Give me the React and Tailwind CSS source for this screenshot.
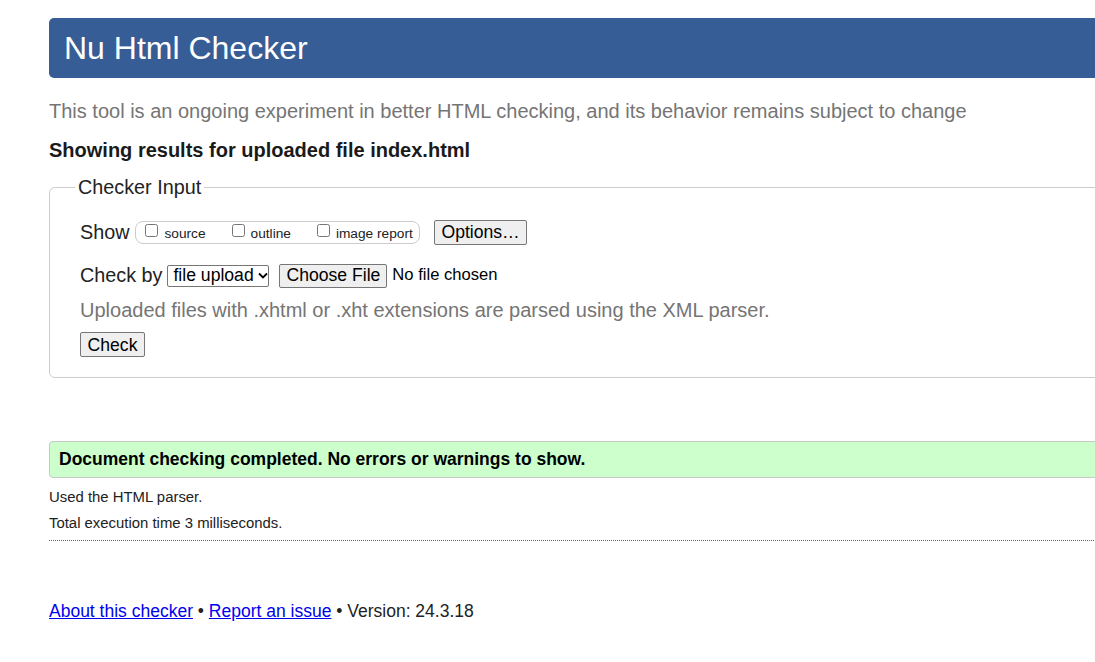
import React from "react";

const Btn = ({ children, className = "" }) => (
  <span
    className={`inline-flex items-center h-[24px] px-[6px] bg-[#efefef] border border-[#767676] rounded-[2px] text-[17.6px] leading-none text-black ${className}`}
  >
    {children}
  </span>
);

const Box = ({ label, className = "" }) => (
  <label className={`flex items-start ${className}`}>
    <input type="checkbox" className="w-[13px] h-[13px] mt-[2px] mr-[6px]" />
    <span className="text-[13.7px] leading-none mt-[5px]">{label}</span>
  </label>
);

const App = () => {
  return (
    <div className="w-[1095px] h-[662px] overflow-hidden bg-white font-['Liberation_Sans',Arial,sans-serif] text-[#222]">
      <div className="w-[1150px] pl-[49px] pt-[18px]">
        <div className="h-[60px] bg-[#365d95] rounded-l-[5px] flex items-center pl-[15px]">
          <h1 className="text-white text-[32px] leading-none">Nu Html Checker</h1>
        </div>

        <p className="mt-[21px] text-[20px] leading-[24px] text-[#757575]">
          This tool is an ongoing experiment in better HTML checking, and its behavior remains subject to change
        </p>

        <p className="mt-[15px] text-[20px] leading-[24px] font-bold text-[#1a1a1a]">
          Showing results for uploaded file index.html
        </p>

        <fieldset className="mt-[14px] border border-[#ccc] rounded-[6px] px-[30px] pb-[20px]">
          <legend className="-ml-[5px] px-[3px] text-[19.8px] leading-[23px]">Checker Input</legend>

          <div className="mt-[21px] flex items-center h-[25px]">
            <span className="text-[19.8px]">Show</span>
            <div className="ml-[6px] flex items-start h-[23px] border border-[#ccc] rounded-[8px] pl-[9px] pr-[6px] w-[285px]">
              <Box label="source" />
              <Box label="outline" className="ml-[26px]" />
              <Box label="image report" className="ml-[26px]" />
            </div>
            <Btn className="ml-[14px] h-[25px]">Options…</Btn>
          </div>

          <div className="mt-[18px] flex items-center h-[25px]">
            <span className="text-[19.8px]">Check by</span>
            <span className="ml-[5px] inline-flex items-center h-[22px] w-[102px] pl-[5px] border border-[#767676] rounded-[2px] text-[17.6px] leading-none text-black">
              file upload
              <svg className="ml-[4px]" width="10" height="7" viewBox="0 0 10 7">
                <path d="M1 1.5 L5 5.5 L9 1.5" fill="none" stroke="#000" strokeWidth="1.8" />
              </svg>
            </span>
            <Btn className="ml-[10px]">Choose File</Btn>
            <span className="ml-[5px] text-[16.6px] text-black">No file chosen</span>
          </div>

          <p className="mt-[10px] text-[20px] leading-[24px] text-[#757575]">
            Uploaded files with .xhtml or .xht extensions are parsed using the XML parser.
          </p>

          <div className="mt-[10px] flex">
            <Btn className="h-[25px] w-[65px] justify-center pt-[2px]">Check</Btn>
          </div>
        </fieldset>

        <div className="mt-[63px] h-[37px] flex items-center pl-[9px] bg-[#ccffcc] border border-[#c8c8c8] rounded-l-[4px]">
          <span className="text-[17.5px] font-bold text-black">
            Document checking completed. No errors or warnings to show.
          </span>
        </div>

        <p className="mt-[6px] text-[14.9px] leading-[26px]">Used the HTML parser.</p>
        <p className="text-[14.9px] leading-[26px]">Total execution time 3 milliseconds.</p>
        <div className="mt-[4px] border-t border-dotted border-[#666]" />

        <p className="mt-[58px] text-[17.5px] leading-[24px]">
          <a href="#" className="text-[#0000ee] underline">About this checker</a>
          {" • "}
          <a href="#" className="text-[#0000ee] underline">Report an issue</a>
          {" • Version: 24.3.18"}
        </p>
      </div>
    </div>
  );
};

export default App;
